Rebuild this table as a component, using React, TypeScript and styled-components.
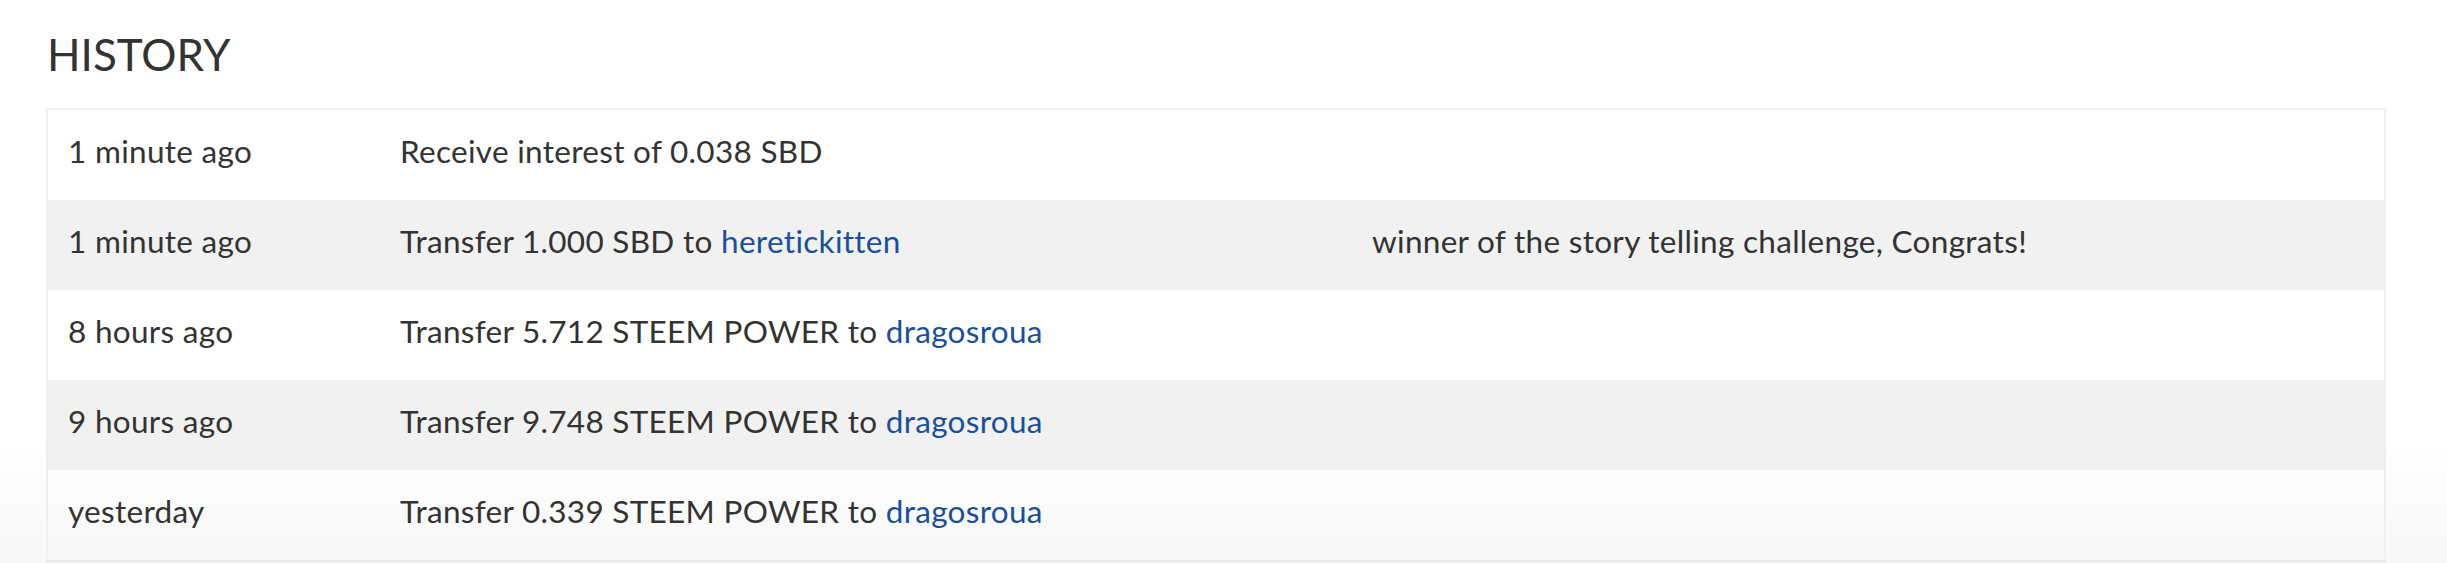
import React, { FC } from 'react';
import styled, { createGlobalStyle } from 'styled-components';

const GlobalStyle = createGlobalStyle`
  html, body {
    margin: 0;
    padding: 0;
  }

  body {
    min-height: 563px;
    background: linear-gradient(to bottom, #ffffff 0, #ffffff 440px, #f7f7f7 563px);
    font-family: Lato, 'Open Sans', sans-serif;
    color: #333333;
  }
`;

const Page = styled.section`
  padding: 32px 61px 0 46px;
`;

const Title = styled.h2`
  margin: 0 0 31px 1px;
  font-size: 44px;
  line-height: 45px;
  font-weight: 400;
  color: #333333;
`;

const Table = styled.div`
  border: 2px solid #efefef;
  border-bottom-color: #e8e8e8;
`;

const Row = styled.div<{ $shaded: boolean }>`
  display: grid;
  grid-template-columns: 332px 972px 1fr;
  align-items: center;
  height: 90px;
  background: ${({ $shaded }) => ($shaded ? '#f1f1f1' : 'transparent')};
`;

const Cell = styled.div`
  padding: 0 20px 8px;
  font-size: 31.5px;
  letter-spacing: 0.3px;
  line-height: 36px;
  white-space: nowrap;
`;

const Account = styled.a`
  color: #1a5099;
  text-decoration: none;
`;

type Entry = {
  when: string;
  action: string;
  to?: string;
  memo?: string;
};

const entries: Entry[] = [
  { when: '1 minute ago', action: 'Receive interest of 0.038 SBD' },
  {
    when: '1 minute ago',
    action: 'Transfer 1.000 SBD to ',
    to: 'heretickitten',
    memo: 'winner of the story telling challenge, Congrats!'
  },
  { when: '8 hours ago', action: 'Transfer 5.712 STEEM POWER to ', to: 'dragosroua' },
  { when: '9 hours ago', action: 'Transfer 9.748 STEEM POWER to ', to: 'dragosroua' },
  { when: 'yesterday', action: 'Transfer 0.339 STEEM POWER to ', to: 'dragosroua' }
];

const App: FC = () => (
  <>
    <GlobalStyle />
    <Page>
      <Title>HISTORY</Title>
      <Table>
        {entries.map((entry, i) => (
          <Row key={i} $shaded={i % 2 === 1}>
            <Cell>{entry.when}</Cell>
            <Cell>
              {entry.action}
              {entry.to && <Account href="#">{entry.to}</Account>}
            </Cell>
            <Cell>{entry.memo}</Cell>
          </Row>
        ))}
      </Table>
    </Page>
  </>
);

export default App;
